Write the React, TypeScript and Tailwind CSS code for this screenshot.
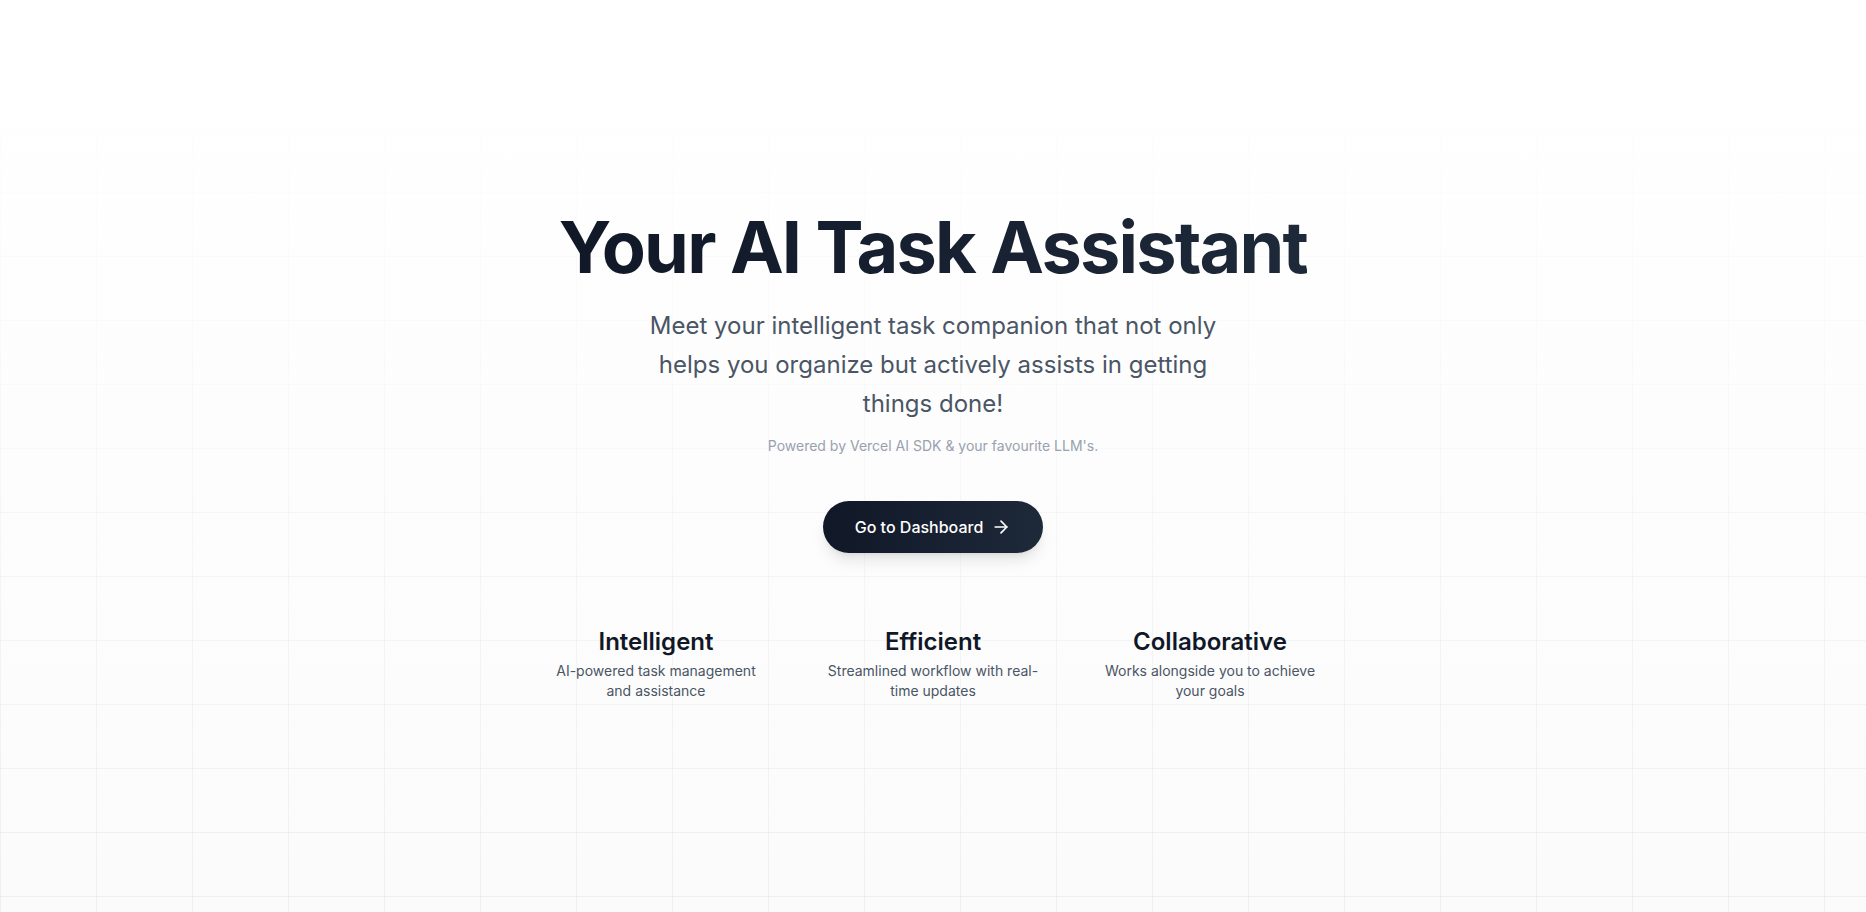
import { ArrowRight } from 'lucide-react';

const features = [
  { title: 'Intelligent', text: 'AI-powered task management and assistance' },
  { title: 'Efficient', text: 'Streamlined workflow with real-time updates' },
  { title: 'Collaborative', text: 'Works alongside you to achieve your goals' },
];

export default function App() {
  return (
    <div className="relative min-h-screen overflow-hidden bg-gradient-to-b from-white to-[#fbfbfb] font-['Inter',sans-serif]">
      {/* grid backdrop */}
      <div className="pointer-events-none absolute inset-0 bg-[linear-gradient(to_right,#80808018_1px,transparent_1px),linear-gradient(to_bottom,#80808018_1px,transparent_1px)] bg-[size:96px_64px] [mask-image:linear-gradient(to_bottom,transparent_5%,black_100%)]" />

      <div className="relative flex min-h-screen flex-col items-center justify-center pt-6 text-center">
        <h1 className="bg-gradient-to-r from-gray-900 to-gray-800 bg-clip-text text-7xl leading-none font-bold tracking-tight text-transparent">
          Your AI Task Assistant
        </h1>
        <p className="mx-auto mt-[23px] max-w-xl text-2xl leading-relaxed text-gray-600">
          Meet your intelligent task companion that not only helps you organize but actively assists in getting things done!
        </p>
        <p className="mt-[13px] text-sm text-gray-400">Powered by Vercel AI SDK &amp; your favourite LLM's.</p>

        <button className="mt-[45px] flex items-center gap-2 rounded-full bg-gradient-to-r from-gray-900 to-gray-800 px-8 py-3.5 text-base font-medium text-white shadow-lg">
          Go to Dashboard
          <ArrowRight className="h-5 w-5" />
        </button>

        <div className="mt-[49px] grid w-[831px] grid-cols-3">
          {features.map((f) => (
            <div key={f.title} className="px-7 py-6">
              <h3 className="text-2xl font-semibold text-gray-900">{f.title}</h3>
              <p className="mt-[3px] text-sm text-gray-600">{f.text}</p>
            </div>
          ))}
        </div>
      </div>
    </div>
  );
}
